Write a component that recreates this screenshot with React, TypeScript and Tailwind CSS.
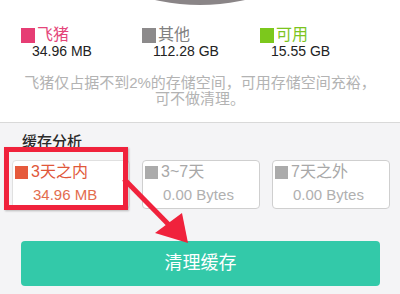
import React from "react";

const font = { fontFamily: '"Liberation Sans", "Noto Sans CJK SC", sans-serif' };

function Legend({ color, textColor, label, value, width }: { color: string; textColor: string; label: string; value: string; width: string }) {
  return (
    <div className={`flex flex-col ${width}`}>
      <div className="flex items-center h-[16px]">
        <div className={`w-[14px] h-[15px] ${color}`} />
        <span className={`ml-[2px] text-[16px] leading-[16px] ${textColor}`}>{label}</span>
      </div>
      <div className="ml-[11px] text-[14px] leading-[16px] text-[#222]">{value}</div>
    </div>
  );
}

function Card({ active, label, value }: { active?: boolean; label: string; value: string }) {
  return (
    <div className={`flex-1 h-[49px] rounded-[4px] border ${active ? "border-[#e0e0e0]" : "border-[#cfcfcf]"} bg-white pl-[2px] pt-[3px]`}>
      <div className="flex items-center h-[16px]">
        <div className={`w-[13px] h-[13px] ${active ? "bg-[#e65a3c]" : "bg-[#ababab]"}`} />
        <span className={`ml-[3px] text-[16px] leading-[16px] ${active ? "text-[#e0573a]" : "text-[#a8a8a8]"}`}>{label}</span>
      </div>
      <div className={`mt-[7px] ml-[18px] text-[15px] leading-[16px] ${active ? "text-[#e36d4e]" : "text-[#b0b0b0]"}`}>{value}</div>
    </div>
  );
}

export default function App() {
  return (
    <div className="relative w-[400px] h-[294px] overflow-hidden bg-[#f4f4f6]" style={font}>
      <div className="bg-white h-[123px] border-b border-[#d9d9d9]">
        <svg className="block" width="400" height="6" viewBox="0 0 400 6">
          <circle cx="200" cy="-200" r="205" fill="#8a8587" />
        </svg>
        <div className="flex pl-[21px] mt-[21px]">
          <Legend color="bg-[#e63d74]" textColor="text-[#e4457a]" label="飞猪" value="34.96 MB" width="w-[121px]" />
          <Legend color="bg-[#8c8a8b]" textColor="text-[#808080]" label="其他" value="112.28 GB" width="w-[118px]" />
          <Legend color="bg-[#7cc81c]" textColor="text-[#7cc41e]" label="可用" value="15.55 GB" width="w-[118px]" />
        </div>
        <div className="mt-[16px] flex flex-col items-center text-[15px] leading-[16px] text-[#b3b3b3]">
          <span>飞猪仅占据不到2%的存储空间，可用存储空间充裕，</span>
          <span>可不做清理。</span>
        </div>
      </div>
      <div className="pl-[12px] pr-[10px]">
        <div className="pt-[9px] pl-[10px] text-[15px] leading-[20px] font-medium text-[#2a2a2a]">缓存分析</div>
        <div className="mt-[8px] flex gap-[12px]">
          <Card active label="3天之内" value="34.96 MB" />
          <Card label="3~7天" value="0.00 Bytes" />
          <Card label="7天之外" value="0.00 Bytes" />
        </div>
      </div>
      <div className="px-[21px] mt-[32px] pr-[20px]">
        <div className="h-[45px] rounded-[4px] bg-[#33c9a9] flex items-center justify-center text-white text-[18px]">
          清理缓存
        </div>
      </div>

      <div className="absolute left-[4px] top-[147px] w-[124px] h-[63px] border-[5px] border-[#f0223c] shadow-[1px_1px_2px_rgba(0,0,0,0.25)]" />
      <svg className="absolute left-0 top-0 pointer-events-none" width="400" height="294" viewBox="0 0 400 294">
        <line x1="124" y1="179" x2="172" y2="228" stroke="#f0223c" strokeWidth="5" />
        <polygon points="188,243 155,233 182,213" fill="#f0223c" />
      </svg>
    </div>
  );
}
